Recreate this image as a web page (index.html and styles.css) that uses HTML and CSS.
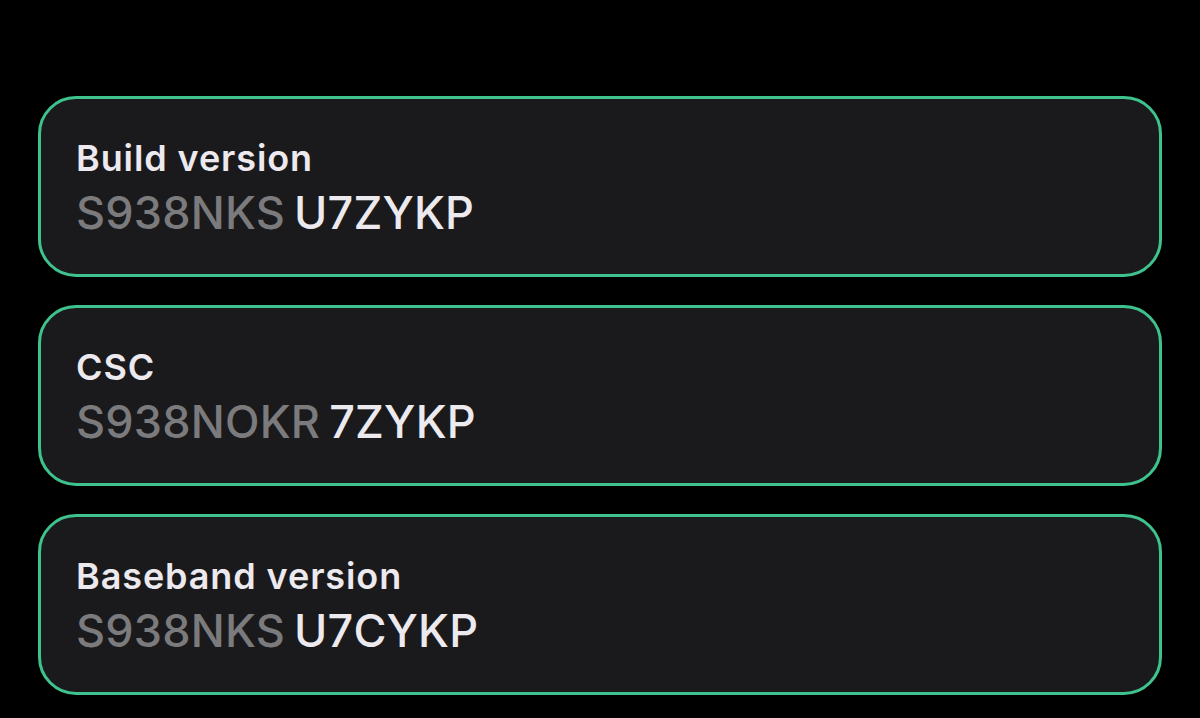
FILE: index.html
```html
<!DOCTYPE html>
<html lang="en">
<head>
    <meta charset="UTF-8">
    <title>Software information</title>
    <link rel="stylesheet" href="styles.css">
</head>
<body>
<div class="list">
    <div class="item">
        <p class="label">Build version</p>
        <p class="value"><span class="dim">S938NKS</span><span class="hl">U7ZYKP</span></p>
    </div>
    <div class="item">
        <p class="label">CSC</p>
        <p class="value"><span class="dim">S938NOKR</span><span class="hl">7ZYKP</span></p>
    </div>
    <div class="item">
        <p class="label">Baseband version</p>
        <p class="value"><span class="dim">S938NKS</span><span class="hl">U7CYKP</span></p>
    </div>
</div>
</body>
</html>
```
FILE: styles.css
```css
html {
    box-sizing: border-box;
    background: #000;
    font-family: Inter, "Noto Sans", sans-serif;
}

*,
*:before,
*:after {
    box-sizing: inherit;
}

body {
    margin: 0;
}

.list {
    display: flex;
    flex-direction: column;
    gap: 28px;
    padding: 96px 38px 0;
}

.item {
    height: 181px;
    background: #1a1a1c;
    border: 3px solid #3ec28e;
    border-radius: 38px;
    padding: 39px 35px 0;
}

.item p {
    margin: 0;
}

.label {
    color: #ece9ef;
    font-size: 36px;
    font-weight: 600;
    line-height: 40px;
    letter-spacing: 0.9px;
}

.value {
    margin-top: 10px !important;
    font-size: 45px;
    font-weight: 500;
    line-height: 50px;
    letter-spacing: 0.2px;
}

.dim {
    color: #7b7b7d;
    margin-right: 9px;
}

.hl {
    color: #ece9ef;
}
```
